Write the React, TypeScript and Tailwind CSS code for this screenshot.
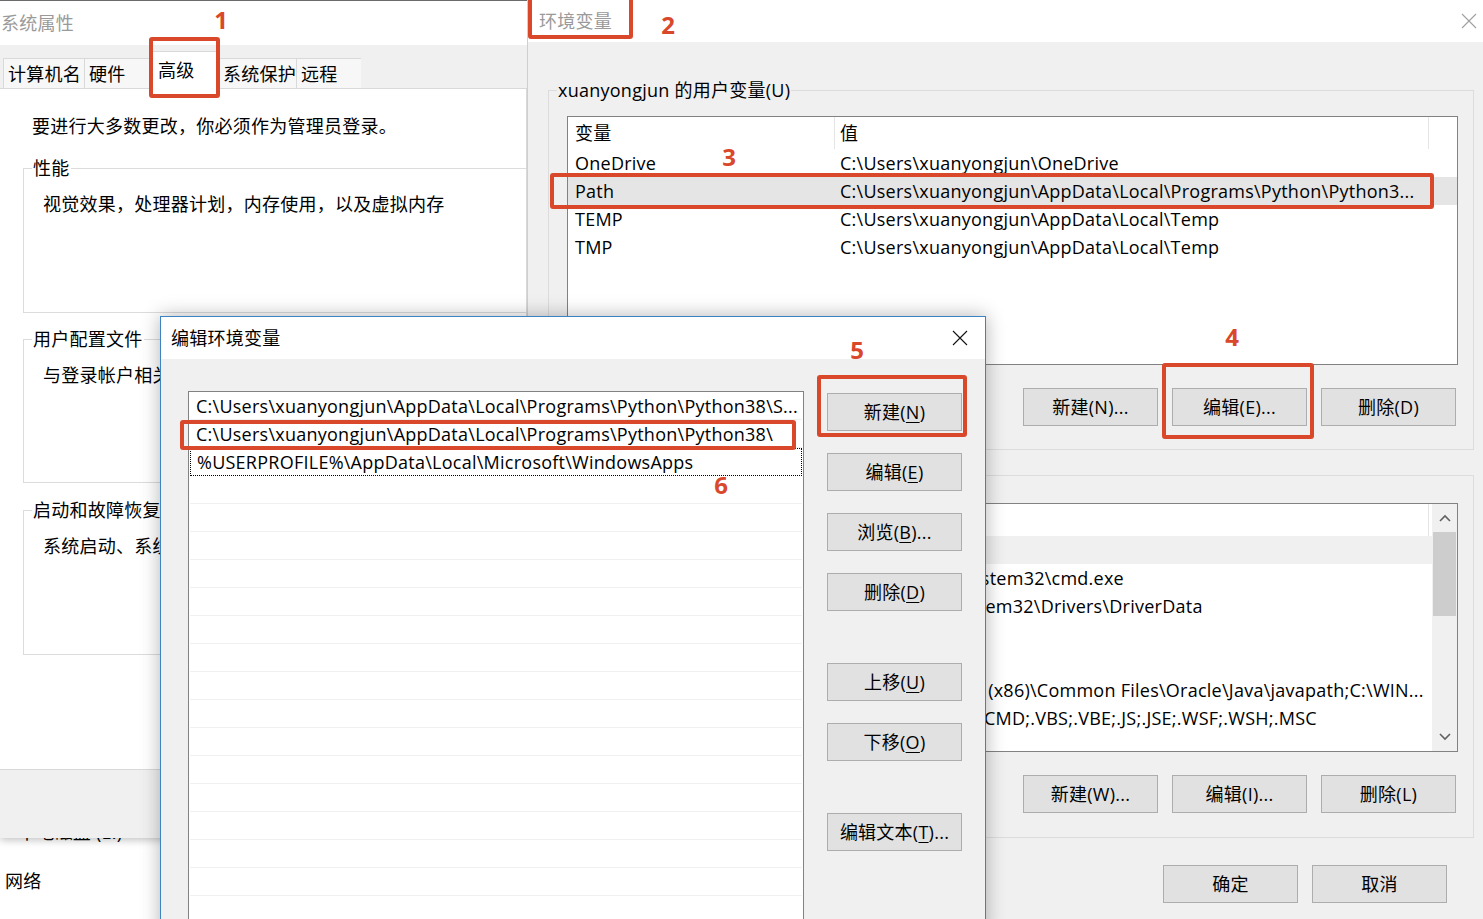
import React from 'react'

const sysTabs = [
  { label: '计算机名', w: 'w-[81px]' },
  { label: '硬件', w: 'w-[66px]' },
  { label: '高级', w: 'w-[68px]', active: true },
  { label: '系统保护', w: 'w-[78px]' },
  { label: '远程', w: 'w-[65px]' },
]

const userVars = [
  { name: 'OneDrive', value: 'C:\\Users\\xuanyongjun\\OneDrive' },
  { name: 'Path', value: 'C:\\Users\\xuanyongjun\\AppData\\Local\\Programs\\Python\\Python3...', selected: true },
  { name: 'TEMP', value: 'C:\\Users\\xuanyongjun\\AppData\\Local\\Temp' },
  { name: 'TMP', value: 'C:\\Users\\xuanyongjun\\AppData\\Local\\Temp' },
]

const systemVars = [
  { name: 'asl.log', value: 'Destination=file', selected: true },
  { name: 'ComSpec', value: 'C:\\WINDOWS\\system32\\cmd.exe' },
  { name: 'DriverData', value: 'C:\\Windows\\System32\\Drivers\\DriverData' },
  { name: 'NUMBER_OF_PROCESSORS', value: '4' },
  { name: 'OS', value: 'Windows_NT' },
  { name: 'Path', value: 'C:\\Program Files (x86)\\Common Files\\Oracle\\Java\\javapath;C:\\WIN...' },
  { name: 'PATHEXT', value: '.COM;.EXE;.BAT;.CMD;.VBS;.VBE;.JS;.JSE;.WSF;.WSH;.MSC' },
]

const pathEntries = [
  'C:\\Users\\xuanyongjun\\AppData\\Local\\Programs\\Python\\Python38\\S...',
  'C:\\Users\\xuanyongjun\\AppData\\Local\\Programs\\Python\\Python38\\',
  '%USERPROFILE%\\AppData\\Local\\Microsoft\\WindowsApps',
]

function Btn({ children, className = '' }: { children: React.ReactNode; className?: string }) {
  return (
    <div className={`flex h-[38px] w-[135px] items-center justify-center border border-[#adadad] bg-[#e1e1e1] ${className}`}>
      {children}
    </div>
  )
}

// access key underline
function U({ children }: { children: React.ReactNode }) {
  return <span className="underline underline-offset-[3px]">{children}</span>
}

function CloseX({ color }: { color: string }) {
  return (
    <svg width="16" height="16" viewBox="0 0 16 16">
      <path d="M1 1L15 15M15 1L1 15" stroke={color} strokeWidth="1.1" />
    </svg>
  )
}

function Group({ label, className = '', children }: { label: string; className?: string; children?: React.ReactNode }) {
  return (
    <fieldset className={`border border-[#dcdcdc] ${className}`}>
      <legend className="ml-[8px] px-[1px] leading-[24px]">{label}</legend>
      {children}
    </fieldset>
  )
}

function Chevron({ up }: { up?: boolean }) {
  return (
    <svg width="12" height="8" viewBox="0 0 12 8">
      <path d={up ? 'M1 7L6 2L11 7' : 'M1 1L6 6L11 1'} stroke="#606060" strokeWidth="1.6" fill="none" />
    </svg>
  )
}

function Mark({ className }: { className: string }) {
  return <div className={`absolute rounded-[3px] border-[4px] border-[#d9482b] ${className}`} />
}

function Num({ n, className }: { n: string; className: string }) {
  return (
    <div className={`absolute w-[20px] text-center text-[24px] font-bold leading-[30px] tracking-normal text-[#d9482b] ${className}`}>
      {n}
    </div>
  )
}

function SystemProperties() {
  return (
    <div className="absolute left-0 top-0 h-[838px] w-[527px] overflow-hidden border-t border-[#6b6b6b] bg-[#f0f0f0] shadow-[0_2px_8px_rgba(0,0,0,0.25)]">
      <div className="flex h-[44px] items-center bg-white pl-[1px] text-[#9a9a9a]">系统属性</div>

      {/* tabs */}
      <div className="flex h-[43px] items-end pl-[3px]">
        {sysTabs.map((t) =>
          t.active ? (
            <div key={t.label} className={`${t.w} -mb-px h-[38px] border-x border-t border-[#d9d9d9] bg-white pl-[7px] pt-[6px] leading-[24px]`}>
              {t.label}
            </div>
          ) : (
            <div key={t.label} className={`${t.w} h-[30px] border-l border-t border-[#d9d9d9] bg-[#f7f7f7] pl-[4px] pt-[3px] leading-[24px]`}>
              {t.label}
            </div>
          )
        )}
      </div>

      {/* tab page */}
      <div className="h-[682px] overflow-hidden border-y border-r border-[#d9d9d9] bg-white pl-[23px]">
        <p className="ml-[9px] mt-[25px] leading-[24px]">要进行大多数更改，你必须作为管理员登录。</p>
        <Group label="性能" className="mt-[18px] h-[157px] w-[520px]">
          <p className="ml-[19px] mt-[12px] leading-[24px]">视觉效果，处理器计划，内存使用，以及虚拟内存</p>
        </Group>
        <Group label="用户配置文件" className="mt-[14px] h-[156px] w-[520px]">
          <p className="ml-[19px] mt-[12px] leading-[24px]">与登录帐户相关的桌面设置</p>
        </Group>
        <Group label="启动和故障恢复" className="mt-[15px] h-[157px] w-[520px]">
          <p className="ml-[19px] mt-[12px] leading-[24px]">系统启动、系统失败和调试信息</p>
        </Group>
      </div>
    </div>
  )
}

function VarList({ rows, scroll, className = '' }: { rows: typeof userVars; scroll?: boolean; className?: string }) {
  return (
    <div className={`ml-[18px] flex h-[249px] w-[891px] border border-[#828282] bg-white ${className}`}>
      <div className="min-w-0 flex-1">
        <div className="flex h-[32px] items-center">
          <div className="w-[266px] pl-[7px]">变量</div>
          <div className="h-full w-[595px] border-x border-[#e5e5e5] pl-[5px] leading-[32px]">值</div>
        </div>
        {rows.map((r) => (
          <div key={r.name} className={`flex h-[28px] items-center whitespace-nowrap ${r.selected ? (scroll ? 'bg-[#f0f0f0]' : 'bg-[#e5e5e5]') : ''}`}>
            <div className="w-[267px] pl-[7px]">{r.name}</div>
            <div className={`overflow-hidden ${scroll ? 'pl-[7px]' : 'pl-[5px]'}`}>{r.value}</div>
          </div>
        ))}
      </div>
      {scroll && (
        <div className="flex w-[25px] flex-col bg-[#f0f0f0]">
          <div className="flex h-[28px] items-center justify-center">
            <Chevron up />
          </div>
          <div className="mx-[1px] h-[84px] bg-[#cdcdcd]" />
          <div className="flex-1" />
          <div className="flex h-[28px] items-center justify-center">
            <Chevron />
          </div>
        </div>
      )}
    </div>
  )
}

function EnvVariables() {
  return (
    <div className="absolute left-[527px] top-0 h-[919px] w-[956px] border-l border-[#cfcfcf] bg-[#f0f0f0]">
      <div className="flex h-[42px] items-center justify-between bg-white pl-[11px] pr-[6px]">
        <span className="text-[#9a9a9a]">环境变量</span>
        <CloseX color="#a0a0a0" />
      </div>

      <div className="pl-[20px]">
        <Group label="xuanyongjun 的用户变量(U)" className="mt-[36px] h-[372px] w-[926px]">
          <VarList rows={userVars} className="mt-[14px]" />
          <div className="mt-[23px] flex justify-end gap-[14px] pr-[17px]">
            <Btn>新建(N)...</Btn>
            <Btn>编辑(E)...</Btn>
            <Btn>删除(D)</Btn>
          </div>
        </Group>

        <Group label="系统变量(S)" className="mt-[13px] h-[375px] w-[926px]">
          <VarList rows={systemVars} scroll className="mt-[16px]" />
          <div className="mt-[23px] flex justify-end gap-[14px] pr-[17px]">
            <Btn>新建(W)...</Btn>
            <Btn>编辑(I)...</Btn>
            <Btn>删除(L)</Btn>
          </div>
        </Group>

        <div className="mt-[27px] flex justify-end gap-[14px] pr-[36px]">
          <Btn>确定</Btn>
          <Btn>取消</Btn>
        </div>
      </div>
    </div>
  )
}

function EditEnvVariable() {
  return (
    <div className="absolute left-[160px] top-[316px] flex h-[620px] w-[826px] flex-col border-x border-t border-[#3c83c4] bg-[#f0f0f0] shadow-[0_0_18px_rgba(0,0,0,0.3)]">
      <div className="flex h-[42px] shrink-0 items-center justify-between bg-white pl-[10px] pr-[17px]">
        <span>编辑环境变量</span>
        <CloseX color="#111" />
      </div>
      <div className="flex flex-1">
        <div className="ml-[27px] mt-[32px] w-[616px] border border-[#828282] bg-white">
          {pathEntries.map((p, i) => (
            <div
              key={p}
              className={`mx-[1px] flex h-[28px] items-center overflow-hidden whitespace-nowrap pl-[6px] ${
                i === 2 ? 'border border-dotted border-black' : 'border-b border-[#f0f0f0]'
              }`}
            >
              {p}
            </div>
          ))}
          {Array.from({ length: 16 }).map((_, i) => (
            <div key={i} className="mx-[1px] h-[28px] border-b border-[#f0f0f0]" />
          ))}
        </div>
        <div className="ml-[23px] mt-[34px] flex flex-col">
          <Btn>新建(<U>N</U>)</Btn>
          <Btn className="mt-[22px]">编辑(<U>E</U>)</Btn>
          <Btn className="mt-[22px]">浏览(<U>B</U>)...</Btn>
          <Btn className="mt-[22px]">删除(<U>D</U>)</Btn>
          <Btn className="mt-[52px]">上移(<U>U</U>)</Btn>
          <Btn className="mt-[22px]">下移(<U>O</U>)</Btn>
          <Btn className="mt-[52px]">编辑文本(<U>T</U>)...</Btn>
        </div>
      </div>
    </div>
  )
}

export default function App() {
  return (
    <div className="relative h-[919px] w-[1483px] overflow-hidden bg-white font-['Open_Sans','Noto_Sans_CJK_SC',sans-serif] text-[18px] leading-[24px] tracking-[0.25px] text-black">
      {/* explorer window behind */}
      <div className="absolute left-0 top-[818px] w-[160px]">
        <div className="flex h-[28px] items-center gap-[6px]">
          <div className="h-[10px] w-[12px] bg-[#9a9a9a]" />
          <span>本地磁盘 (E:)</span>
        </div>
        <div className="mt-[23px] pl-[5px]">网络</div>
      </div>

      <SystemProperties />
      <EnvVariables />
      <EditEnvVariable />

      {/* annotations */}
      <Mark className="left-[149px] top-[37px] h-[61px] w-[71px]" />
      <Num n="1" className="left-[211px] top-[5px]" />
      <Mark className="left-[528px] top-[-4px] h-[43px] w-[105px]" />
      <Num n="2" className="left-[658px] top-[10px]" />
      <Mark className="left-[550px] top-[173px] h-[36px] w-[884px]" />
      <Num n="3" className="left-[719px] top-[142px]" />
      <Mark className="left-[1162px] top-[363px] h-[76px] w-[152px]" />
      <Num n="4" className="left-[1222px] top-[322px]" />
      <Mark className="left-[817px] top-[375px] h-[62px] w-[150px]" />
      <Num n="5" className="left-[847px] top-[335px]" />
      <Mark className="left-[180px] top-[420px] h-[30px] w-[616px]" />
      <Num n="6" className="left-[711px] top-[470px]" />
    </div>
  )
}
